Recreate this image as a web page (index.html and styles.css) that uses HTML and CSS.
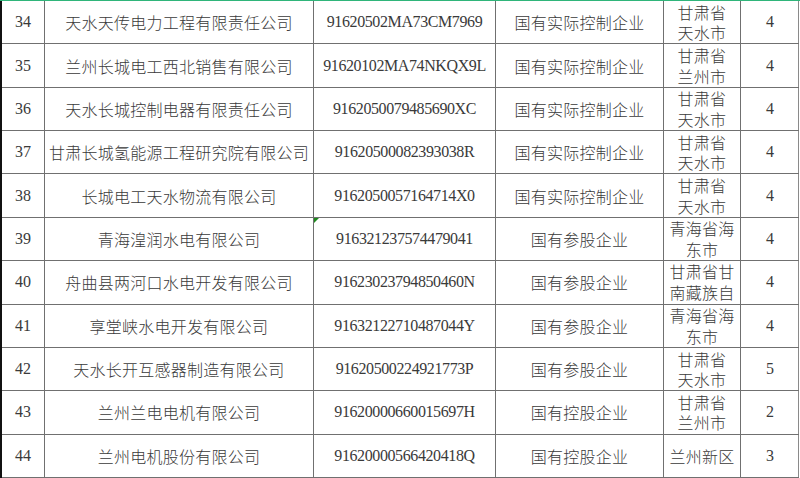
FILE: index.html
```html
<!DOCTYPE html>
<html lang="zh">
<head>
<meta charset="utf-8">
<title>企业名单</title>
<link rel="stylesheet" href="styles.css">
</head>
<body>
<div class="sheet">
  <div class="row"><div class="c num">34</div><div class="c name">天水天传电力工程有限责任公司</div><div class="c code">91620502MA73CM7969</div><div class="c type">国有实际控制企业</div><div class="c region">甘肃省<br>天水市</div><div class="c cnt">4</div></div>
  <div class="row"><div class="c num">35</div><div class="c name">兰州长城电工西北销售有限公司</div><div class="c code">91620102MA74NKQX9L</div><div class="c type">国有实际控制企业</div><div class="c region">甘肃省<br>兰州市</div><div class="c cnt">4</div></div>
  <div class="row"><div class="c num">36</div><div class="c name">天水长城控制电器有限责任公司</div><div class="c code">9162050079485690XC</div><div class="c type">国有实际控制企业</div><div class="c region">甘肃省<br>天水市</div><div class="c cnt">4</div></div>
  <div class="row"><div class="c num">37</div><div class="c name">甘肃长城氢能源工程研究院有限公司</div><div class="c code">91620500082393038R</div><div class="c type">国有实际控制企业</div><div class="c region">甘肃省<br>天水市</div><div class="c cnt">4</div></div>
  <div class="row"><div class="c num">38</div><div class="c name">长城电工天水物流有限公司</div><div class="c code">9162050057164714X0</div><div class="c type">国有实际控制企业</div><div class="c region">甘肃省<br>天水市</div><div class="c cnt">4</div></div>
  <div class="row"><div class="c num">39</div><div class="c name">青海湟润水电有限公司</div><div class="c code flag">916321237574479041</div><div class="c type">国有参股企业</div><div class="c region">青海省海<br>东市</div><div class="c cnt">4</div></div>
  <div class="row"><div class="c num">40</div><div class="c name">舟曲县两河口水电开发有限公司</div><div class="c code">91623023794850460N</div><div class="c type">国有参股企业</div><div class="c region top">甘肃省甘<br>南藏族自<br>治州</div><div class="c cnt">4</div></div>
  <div class="row"><div class="c num">41</div><div class="c name">享堂峡水电开发有限公司</div><div class="c code">91632122710487044Y</div><div class="c type">国有参股企业</div><div class="c region">青海省海<br>东市</div><div class="c cnt">4</div></div>
  <div class="row"><div class="c num">42</div><div class="c name">天水长开互感器制造有限公司</div><div class="c code">91620500224921773P</div><div class="c type">国有参股企业</div><div class="c region">甘肃省<br>天水市</div><div class="c cnt">5</div></div>
  <div class="row"><div class="c num">43</div><div class="c name">兰州兰电电机有限公司</div><div class="c code">91620000660015697H</div><div class="c type">国有控股企业</div><div class="c region">甘肃省<br>兰州市</div><div class="c cnt">2</div></div>
  <div class="row"><div class="c num">44</div><div class="c name">兰州电机股份有限公司</div><div class="c code">91620000566420418Q</div><div class="c type">国有控股企业</div><div class="c region">兰州新区</div><div class="c cnt">3</div></div>
</div>
</body>
</html>
```

FILE: styles.css
```css
html, body {
  margin: 0;
  padding: 0;
  background: #ffffff;
}

.sheet {
  width: 800px;
  height: 478px;
  overflow: hidden;
  box-sizing: border-box;
  border-top: 1px solid #2fb57a;
  display: grid;
  grid-template-rows: repeat(11, 43.36px);
  font-family: "Liberation Serif", "Noto Sans CJK SC", serif;
  font-size: 16px;
  color: #3a3a3a;
}

.row {
  display: grid;
  grid-template-columns: 43px 269px 182px 168px 77px 58px;
  border-left: 2px solid #111111;
  border-right: 1px solid #8a8a8a;
  width: 799px;
  box-sizing: border-box;
}

.c {
  border-right: 1px solid #707070;
  border-bottom: 1px solid #707070;
  display: flex;
  align-items: center;
  justify-content: center;
  text-align: center;
  overflow: hidden;
  box-sizing: border-box;
  position: relative;
}

.name, .type, .region {
  font-family: "Noto Sans CJK SC", sans-serif;
  font-weight: 300;
  letter-spacing: 0.25px;
}

.name, .type {
  white-space: nowrap;
}

.region {
  line-height: 20.5px;
  padding: 0 2px;
  white-space: nowrap;
}

.region.top {
  align-items: flex-start;
  padding-top: 0;
}

.cnt {
  border-right: none;
}

.code {
  white-space: nowrap;
  letter-spacing: -0.4px;
}

.flag::before {
  content: "";
  position: absolute;
  left: 0;
  top: 0;
  width: 0;
  height: 0;
  border-top: 5px solid #1e8a1e;
  border-right: 5px solid transparent;
}
```
